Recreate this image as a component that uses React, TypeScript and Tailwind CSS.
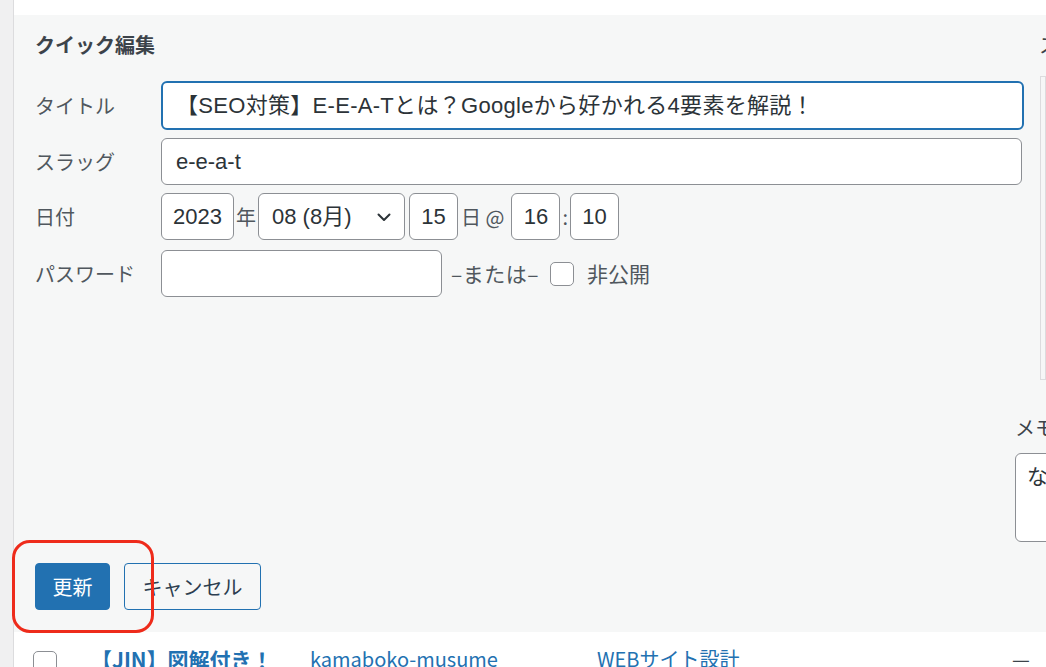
function Chevron() {
  return (
    <svg width="16" height="16" viewBox="0 0 16 16" fill="none" className="text-[#2c3338]">
      <path d="M2.5 5.5l5.5 5.5 5.5-5.5" stroke="currentColor" strokeWidth="2" strokeLinecap="round" strokeLinejoin="round" />
    </svg>
  )
}

function Label({ children }: { children: React.ReactNode }) {
  return <div className="w-[126px] shrink-0 text-[20px] text-[#50575e]">{children}</div>
}

const inputFont = "font-['Liberation_Sans','Noto_Sans_CJK_JP',sans-serif]"

function SmallInput({ value, w }: { value: string; w: string }) {
  return (
    <div className={`${w} h-[47px] shrink-0 flex items-center justify-center rounded-[6px] border border-[#8c8f94] bg-white text-[22px] text-[#2c3338] ${inputFont}`}>
      {value}
    </div>
  )
}

function App() {
  return (
    <div className="relative flex h-[667px] w-[1046px] overflow-hidden bg-[#f0f0f1] font-['Noto_Sans_CJK_JP','Noto_Sans',sans-serif]">
      {/* left gutter */}
      <div className="w-[14px] shrink-0 border-r border-[#dcdcde]" />

      <div className="flex min-w-0 flex-1 flex-col">
        <div className="h-[15px] shrink-0 bg-white" />

        {/* Quick edit panel */}
        <div className="flex h-[617px] shrink-0 bg-[#f6f7f7]">
          {/* Form column */}
          <div className="flex w-[1001px] shrink-0 flex-col pl-[21px] pt-[18px] pb-[22px]">
            <h3 className="m-0 h-[24px] text-[20px] font-bold leading-[24px] text-[#3c434a]">クイック編集</h3>

            <div className="mt-[24px] flex items-center">
              <Label>タイトル</Label>
              <div className={`flex h-[49px] w-[863px] shrink-0 items-center rounded-[6px] border-2 border-[#2271b1] bg-white pl-[13px] text-[22px] tracking-[0.3px] text-[#2c3338] whitespace-nowrap ${inputFont}`}>
                【SEO対策】E-E-A-Tとは？Googleから好かれる4要素を解説！
              </div>
            </div>

            <div className="mt-[8px] flex items-center">
              <Label>スラッグ</Label>
              <div className={`flex h-[47px] w-[861px] shrink-0 items-center rounded-[6px] border border-[#8c8f94] bg-white pl-[14px] text-[22px] text-[#2c3338] ${inputFont}`}>
                e-e-a-t
              </div>
            </div>

            <div className="mt-[8px] flex items-center">
              <Label>日付</Label>
              <SmallInput value="2023" w="w-[73px]" />
              <span className="mx-[2px] text-[20px] text-[#50575e]">年</span>
              <div className={`flex h-[47px] w-[147px] shrink-0 items-center justify-between rounded-[6px] border border-[#8c8f94] bg-white pl-[13px] pr-[12px] text-[22px] text-[#2c3338] ${inputFont}`}>
                <span>08 (8月)</span>
                <Chevron />
              </div>
              <div className="ml-[4px]">
                <SmallInput value="15" w="w-[49px]" />
              </div>
              <span className="ml-[3px] mr-[7px] whitespace-pre text-[20px] text-[#50575e]">日 @</span>
              <SmallInput value="16" w="w-[49px]" />
              <span className="mx-[2px] text-[20px] text-[#50575e]">:</span>
              <SmallInput value="10" w="w-[49px]" />
            </div>

            <div className="mt-[10px] flex items-center">
              <Label>パスワード</Label>
              <div className="h-[47px] w-[281px] shrink-0 rounded-[6px] border border-[#8c8f94] bg-white" />
              <span className="ml-[9px] text-[21px] tracking-[0.5px] text-[#50575e]">–または–</span>
              <div className="ml-[11px] h-[24px] w-[24px] shrink-0 rounded-[5px] border border-[#8c8f94] bg-white" />
              <span className="ml-[13px] text-[21px] text-[#50575e]">非公開</span>
            </div>

            {/* Buttons */}
            <div className="mt-auto flex gap-[14px]">
              <button className="h-[47px] w-[75px] rounded-[4px] border border-[#2271b1] bg-[#2271b1] text-[20px] text-white">
                更新
              </button>
              <button className="h-[47px] w-[137px] rounded-[4px] border border-[#2271b1] bg-[#f6f7f7] text-[20px] text-[#2c3e50]">
                キャンセル
              </button>
            </div>
          </div>

          {/* Right column */}
          <div className="flex min-w-0 flex-1 flex-col pt-[18px]">
            <div className="h-[24px] pl-[24px] text-[20px] leading-[24px] text-[#3c434a] whitespace-nowrap">ステータス</div>
            <div className="ml-[25px] mt-[19px] h-[304px] border border-[#dcdcde] bg-[#f6f7f7]" />
            <div className="mt-[35px] text-[20px] leading-[26px] text-[#3c434a] whitespace-nowrap">メモ</div>
            <div className="mt-[12px] h-[89px] w-[60px] rounded-[6px] border border-[#8c8f94] bg-white pl-[11px] pt-[6px] text-[21px] text-[#2c3338]">
              な
            </div>
          </div>
        </div>

        {/* Next list row */}
        <div className="flex flex-1 items-start bg-white pt-[19px] whitespace-nowrap text-[20px] text-[#2271b1]">
          <div className="ml-[19px] h-[24px] w-[24px] shrink-0 rounded-[5px] border border-[#8c8f94] bg-white" />
          <span className="ml-[34px] -mt-[7px] w-[219px] shrink-0 text-[21px] font-bold">【JIN】図解付き！</span>
          <span className="-mt-[7px] w-[287px] shrink-0">kamaboko-musume</span>
          <span className="-mt-[7px] w-[415px] shrink-0">WEBサイト設計</span>
          <span className="-mt-[7px] text-[#3c434a]">—</span>
        </div>
      </div>

      {/* red annotation */}
      <div className="absolute left-[12px] top-[540px] h-[93px] w-[142px] rounded-[18px] border-[3px] border-[#ee2b1b]" />
    </div>
  )
}

export default App
